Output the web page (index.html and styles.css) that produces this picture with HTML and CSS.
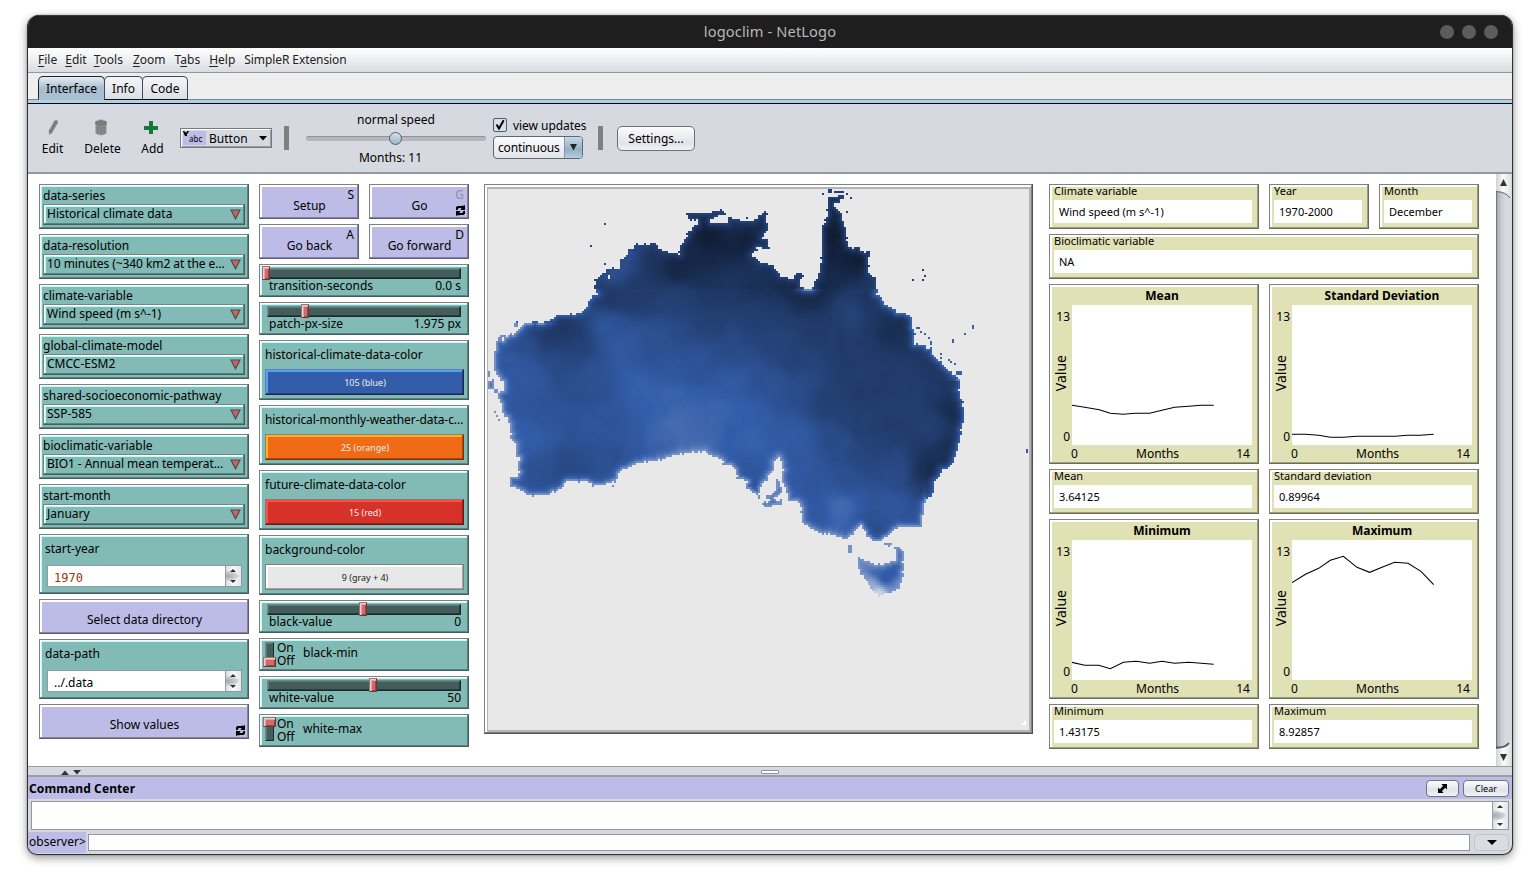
FILE: index.html
```html
<!DOCTYPE html>
<html lang="en">
<head>
<meta charset="utf-8">
<title>logoclim - NetLogo</title>
<link rel="stylesheet" href="styles.css">
</head>
<body>
<svg class="defs" width="0" height="0">
  <symbol id="cycle" viewBox="0 0 11 11">
    <path d="M1 5V2.2L2.4 1H6.8V0L8 1.2L9 .2H10V5H5.8V4L6.8 3H3.6L2.6 5Z"/>
    <path d="M10 6V8.8L8.6 10H4.2V11L3 9.8L2 10.8H1V6H5.2V7L4.2 8H7.4L8.4 6Z"/>
  </symbol>
  <symbol id="tri" viewBox="0 0 11 11"><path d="M1 1H10L5.5 9.8Z" fill="#c86464" stroke="#484848" stroke-width="1.1"/></symbol>
</svg>
<div class="window">
  <div class="titlebar"><span class="title">logoclim - NetLogo</span><span class="dots"><i></i><i></i><i></i></span></div>
  <nav class="menubar"><span><u>F</u>ile</span><span><u>E</u>dit</span><span class="m-tools"><u>T</u>ools</span><span class="m-zoom"><u>Z</u>oom</span><span class="m-gap">T<u>a</u>bs</span><span class="m-gap"><u>H</u>elp</span><span class="m-gap m-tight">SimpleR Extension</span></nav>
  <div class="tabs"><span class="tab on">Interface</span><span class="tab info">Info</span><span class="tab code">Code</span></div>
  <div class="tabline"></div>
  <div class="toolbar">
    <div class="tool t-edit"><svg width="12" height="17" viewBox="0 0 12 17"><path d="M7.5 1.5L10.5 1L10.8 4L5.5 13.5L2 16L1.8 11.5Z" fill="#8b8b8b"/><path d="M7 2.5L10.3 4.3M2 12L5 13.5M8 4L4 12" stroke="#636363" stroke-width=".8"/></svg>Edit</div>
    <div class="tool t-del"><svg width="14" height="17" viewBox="0 0 14 17"><path d="M1.5 4H12.5V14.5Q7 18 1.5 14.5Z" fill="#8e8e8e"/><ellipse cx="7" cy="3.5" rx="6" ry="2.3" fill="#7b7b7b"/><path d="M5 1.2H9M4 7V14.5M7 7.5V15M10 7V14.5M1.5 5Q7 7.5 12.5 5" fill="none" stroke="#747474"/></svg>Delete</div>
    <div class="tool t-add"><svg width="14" height="17" viewBox="0 0 14 17"><path d="M5 2H9V7H14V11H9V15H5V11H0V7H5Z" fill="#16793a"/></svg>Add</div>
    <div class="widgetpick"><span class="pickicon"><svg width="6" height="5" viewBox="0 0 6 5"><path d="M0 0H1L2 1H3V2L4 1V0H6L5 2L4 3V5H2L1 3Z"/></svg>abc</span><span class="picktext">Button</span><svg width="8" height="5" viewBox="0 0 8 5"><path d="M0 0H8L4 4.6Z"/></svg></div>
    <div class="sep s1"></div>
    <div class="speed"><span>normal speed</span><div class="track"><i></i></div><span class="ticks">Months: 11</span></div>
    <div class="updates"><div class="check"><svg width="14" height="14" viewBox="0 0 14 14"><rect x=".5" y=".5" width="13" height="13" rx="1.5" fill="#d4e0ea" stroke="#49606f"/><path d="M3.5 6.5L6 10.5L10.7 2.3" fill="none" stroke="#000" stroke-width="2"/></svg><span>view updates</span></div>
      <div class="combo"><span>continuous</span><b><svg width="7" height="7" viewBox="0 0 7 7"><path d="M0 0H7L3.5 6.5Z" fill="#222"/></svg></b></div></div>
    <div class="sep s2"></div>
    <div class="settings">Settings...</div>
  </div>
  <div class="workspace">
    <div class="stage">
      <section class="col1">
        <div class="w teal chooser"><label>data-series</label><div class="box"><span>Historical climate data</span><svg width="11" height="11"><use href="#tri"/></svg></div></div>
        <div class="w teal chooser"><label>data-resolution</label><div class="box"><span class="squeeze">10 minutes (~340 km2 at the e...</span><svg width="11" height="11"><use href="#tri"/></svg></div></div>
        <div class="w teal chooser"><label>climate-variable</label><div class="box"><span>Wind speed (m s^-1)</span><svg width="11" height="11"><use href="#tri"/></svg></div></div>
        <div class="w teal chooser"><label>global-climate-model</label><div class="box"><span>CMCC-ESM2</span><svg width="11" height="11"><use href="#tri"/></svg></div></div>
        <div class="w teal chooser"><label>shared-socioeconomic-pathway</label><div class="box"><span>SSP-585</span><svg width="11" height="11"><use href="#tri"/></svg></div></div>
        <div class="w teal chooser"><label>bioclimatic-variable</label><div class="box"><span class="squeeze">BIO1 - Annual mean temperat...</span><svg width="11" height="11"><use href="#tri"/></svg></div></div>
        <div class="w teal chooser"><label>start-month</label><div class="box"><span>January</span><svg width="11" height="11"><use href="#tri"/></svg></div></div>
        <div class="w teal input"><label>start-year</label><div class="field"><span class="num">1970</span><div class="mini"></div></div></div>
        <div class="w purple button"><span>Select data directory</span></div>
        <div class="w teal input"><label>data-path</label><div class="field"><span>../.data</span><div class="mini"></div></div></div>
        <div class="w purple button"><span>Show values</span><svg class="loop" width="11" height="11"><use href="#cycle"/></svg></div>
      </section>
      <section class="col2">
        <div class="pair"><div class="w purple button"><span>Setup</span><em>S</em></div><div class="w purple button"><span>Go</span><em class="dim">G</em><svg class="loop" width="11" height="11"><use href="#cycle"/></svg></div></div>
        <div class="pair"><div class="w purple button"><span>Go back</span><em>A</em></div><div class="w purple button"><span>Go forward</span><em>D</em></div></div>
        <div class="w teal slider"><div class="groove"><i style="left:-6px"></i></div><div class="cap"><span>transition-seconds</span><span>0.0 s</span></div></div>
        <div class="w teal slider"><div class="groove"><i style="left:33px"></i></div><div class="cap"><span>patch-px-size</span><span>1.975 px</span></div></div>
        <div class="w teal color"><label>historical-climate-data-color</label><div class="swatch blue">105 (blue)</div></div>
        <div class="w teal color"><label class="squeeze">historical-monthly-weather-data-c...</label><div class="swatch orange">25 (orange)</div></div>
        <div class="w teal color"><label>future-climate-data-color</label><div class="swatch red">15 (red)</div></div>
        <div class="w teal color"><label>background-color</label><div class="swatch gray">9 (gray + 4)</div></div>
        <div class="w teal slider"><div class="groove"><i style="left:91px"></i></div><div class="cap"><span>black-value</span><span>0</span></div></div>
        <div class="w teal switch"><div class="slot"><i class="off"></i></div><div class="states"><span>On</span><span>Off</span></div><label>black-min</label></div>
        <div class="w teal slider"><div class="groove"><i style="left:101px"></i></div><div class="cap"><span>white-value</span><span>50</span></div></div>
        <div class="w teal switch"><div class="slot"><i></i></div><div class="states"><span>On</span><span>Off</span></div><label>white-max</label></div>
      </section>
      <div class="view"><div class="world"><canvas id="world" width="271" height="272"></canvas></div></div>
      <section class="col3">
        <div class="w olive monitor wide2"><label>Climate variable</label><div>Wind speed (m s^-1)</div></div>
        <div class="w olive monitor"><label>Year</label><div>1970-2000</div></div>
        <div class="w olive monitor"><label>Month</label><div>December</div></div>
        <div class="w olive monitor wide4"><label>Bioclimatic variable</label><div>NA</div></div>
        <div class="w olive plot wide2"><h3>Mean</h3><div class="yaxis"><span>13</span><b>Value</b><span>0</span></div><svg class="area" viewBox="0 0 540 420"><polyline points="0,301 38,307 82,314 115,325 154,328 190,325 233,325 270,316 308,307 350,304 387,301 425,301"/></svg><div class="xaxis"><span>0</span><span class="mid">Months</span><span>14</span></div></div>
        <div class="w olive plot wide2"><h3>Standard Deviation</h3><div class="yaxis"><span>13</span><b>Value</b><span>0</span></div><svg class="area" viewBox="0 0 540 420"><polyline points="0,388 40,388 80,391 115,397 154,397 195,394 310,394 345,391 385,391 425,388"/></svg><div class="xaxis"><span>0</span><span class="mid">Months</span><span>14</span></div></div>
        <div class="w olive monitor wide2"><label>Mean</label><div>3.64125</div></div>
        <div class="w olive monitor wide2"><label>Standard deviation</label><div>0.89964</div></div>
        <div class="w olive plot wide2"><h3>Minimum</h3><div class="yaxis"><span>13</span><b>Value</b><span>0</span></div><svg class="area" viewBox="0 0 540 420"><polyline points="0,367 38,376 80,376 115,386 154,367 193,364 233,370 270,364 308,370 350,367 425,373"/></svg><div class="xaxis"><span>0</span><span class="mid">Months</span><span>14</span></div></div>
        <div class="w olive plot wide2"><h3>Maximum</h3><div class="yaxis"><span>13</span><b>Value</b><span>0</span></div><svg class="area" viewBox="0 0 540 420"><polyline points="0,128 42,102 80,85 115,61 154,49 195,82 233,97 270,82 308,67 348,70 387,94 425,134"/></svg><div class="xaxis"><span>0</span><span class="mid">Months</span><span>14</span></div></div>
        <div class="w olive monitor wide2"><label>Minimum</label><div>1.43175</div></div>
        <div class="w olive monitor wide2"><label>Maximum</label><div>8.92857</div></div>
      </section>
    </div>
    <div class="scroll">
      <svg width="16" height="592" viewBox="0 0 16 592">
        <defs><linearGradient id="sb"><stop offset="0" stop-color="#9b9da3"/><stop offset=".3" stop-color="#c6c9d1"/><stop offset=".6" stop-color="#d6d9e0"/></linearGradient><linearGradient id="bt"><stop offset="0" stop-color="#d2d3d6"/><stop offset=".5" stop-color="#fafafa"/><stop offset="1" stop-color="#dfe1e5"/></linearGradient></defs>
        <rect width="16" height="592" fill="url(#sb)"/><rect width="1" height="592" fill="#777"/>
        <path d="M0 0H15V25Q11 17 0 17Z" fill="url(#bt)"/><path d="M0 17.5Q10 18 14 24" fill="none" stroke="#666"/>
        <path d="M0 592H15V567Q11 575 0 575Z" fill="url(#bt)"/><path d="M0 573.5Q9 574 13 569" fill="none" stroke="#555" stroke-width="2"/>
        <path d="M7.5 5L11 12H4Z" fill="#333"/><path d="M7.5 587L11 580H4Z" fill="#333"/>
      </svg>
    </div>
  </div>
  <div class="divider"><svg width="20" height="5" viewBox="0 0 20 5"><path d="M0 5L4 .5L8 5ZM12 0H20L16 4.5Z" fill="#333"/></svg><i></i></div>
  <div class="cchead"><b>Command Center</b><span class="btn expand"><svg width="11" height="11" viewBox="0 0 11 11"><path d="M4.5 1H10V6.5L8.2 4.8L5 8L6.5 10H1V4.5L2.8 6.2L6 3Z"/></svg></span><span class="btn clear">Clear</span></div>
  <div class="ccbody">
    <div class="output"><div class="mini"></div></div>
    <div class="line"><span>observer&gt;</span><div class="cmd"></div><div class="hist"><svg width="10" height="5" viewBox="0 0 10 5"><path d="M0 0H10L5 5Z"/></svg></div></div>
  </div>
</div>
<script src="world.js"></script>
</body>
</html>
```
FILE: styles.css
```css
* { box-sizing: border-box; }
body { margin: 0; padding: 15px 27px; background: #fff; font: 12px/16px "Noto Sans", "Open Sans", sans-serif; color: #000; white-space: nowrap; height: 894px; overflow: hidden; }
.defs { position: absolute; }
.window { width: 1486px; height: 840px; border: 1px solid #303134; border-top: 0; border-radius: 12px 12px 10px 10px; background: #d6d9e0; overflow: hidden; box-shadow: 0 3px 10px rgba(0,0,0,.4), 0 0 2px rgba(0,0,0,.35); }
i { font-style: normal; display: block; }
svg { flex: none; display: block; }
.squeeze { letter-spacing: -.07px; }

.titlebar { height: 33px; background: #1e1e1e; border-top: 1px solid #3a3a3a; display: flex; align-items: center; justify-content: center; position: relative; color: #b8b8b8; font-size: 14.6px; letter-spacing: .15px; padding-bottom: 2px; }
.dots { position: absolute; right: 14px; top: 9px; display: flex; gap: 8px; }
.dots i { width: 14px; height: 14px; border-radius: 50%; background: #5c5c5c; }
.menubar { height: 25px; background: linear-gradient(#fff, #f1f2f4 40%, #d8dbe1); border-bottom: 1px solid #9297a3; display: flex; gap: 8px; padding: 4px 10px; color: #222; }
.menubar u { text-underline-offset: 2px; }
.m-tools { margin-left: -1px; }
.m-zoom { margin-left: 2px; }
.m-gap { margin-left: 1px; }
.m-tight { letter-spacing: -.09px; }
.tabs { height: 27px; background: #eee; border-bottom: 1px solid #7b8594; display: flex; padding: 3px 10px 0; }
.tab { height: 24px; border: 1px solid #45475a; border-bottom-color: #111; border-radius: 5px 5px 0 0; margin-right: -1px; text-align: center; line-height: 24px; background: linear-gradient(#f4f5f7, #dcdfe5); }
.tab.on { width: 67px; background: linear-gradient(#e6edf2, #a9bed0 50%, #a9c0d3); border-color: #17253c; border-bottom-color: #a9c0d3; }
.tab.info { width: 39px; }
.tab.code { width: 46px; }
.tabline { height: 4px; background: #b4cde0; border-bottom: 1px solid #000814; }

.toolbar { height: 70px; border-bottom: 2px solid #9297a5; display: flex; align-items: flex-start; padding-left: 10px; }
.tool { display: flex; flex-direction: column; align-items: center; padding-top: 15px; gap: 5px; }
.t-edit { width: 29px; }
.t-del { width: 71px; }
.t-add { width: 29px; }
.t-del svg, .t-add svg { margin-right: 3px; }
.widgetpick { margin: 24px 0 0 13px; width: 92px; height: 20px; border: 1px solid #7a7a7a; box-shadow: inset 1px 1px #fff, inset -1px -1px #9a9ca2; background: #d6d9e0; display: flex; align-items: center; padding: 0 4px 0 2px; }
.pickicon { width: 23px; height: 14px; background: #bcbce6; font-size: 8px; line-height: 15px; display: flex; }
.picktext { width: 38px; margin: 2px 12px 0 3px; }
.sep { width: 5px; height: 24px; margin-top: 22px; background: #808080; }
.s1 { margin-left: 12px; }
.s2 { margin-left: 15px; }
.speed { width: 180px; margin-left: 17px; padding-top: 8px; display: flex; flex-direction: column; align-items: center; }
.track { width: 180px; height: 5px; margin: 8px 0 9px; border-radius: 3px; background: #b4b7be; border-top: 1px solid #8f929b; }
.track i { width: 13px; height: 13px; margin: -5px 0 0 83px; border-radius: 50%; border: 1px solid #4d6274; background: linear-gradient(#d5e1eb, #9db5c8); }
.ticks { margin-right: 11px; }
.updates { width: 90px; margin-left: 7px; padding-top: 14px; }
.check { display: flex; gap: 6px; height: 18px; }
.check span { letter-spacing: -.05px; }
.combo { width: 90px; height: 23px; border: 1px solid #5b6876; border-radius: 4px; background: linear-gradient(#fbfbfc, #e3e5ea); display: flex; line-height: 22px; overflow: hidden; }
.combo span { width: 72px; padding-left: 4px; letter-spacing: -.15px; }
.combo b { width: 18px; background: linear-gradient(#c9d8e3, #93b0c5 60%, #b9cedd); border-left: 1px solid #7e97ab; display: flex; align-items: center; justify-content: center; }
.settings { margin: 22px 0 0 14px; width: 78px; height: 25px; border: 1px solid #6a7077; border-radius: 5px; background: linear-gradient(#fcfcfd, #e2e4ea 70%, #f0f2f5); text-align: center; line-height: 24px; }

.workspace { height: 592px; display: flex; background: #fff; }
.stage { width: 1468px; padding: 10px 0 0 11px; display: flex; align-items: flex-start; }
.col1, .col2 { width: 210px; display: flex; flex-direction: column; gap: 5px; }
.col2 { margin-left: 10px; }
.pair { display: grid; grid-template-columns: 100px 100px; gap: 10px; }
.w { border: 1px solid #808080; position: relative; }
.teal { background: #82bab5; border-right-color: #465f5d; border-bottom-color: #465f5d; box-shadow: inset -1px -1px #5b827f, inset 1px 1px #fff, inset 2px 2px #b6ffff; }
.purple { background: #bcbce6; border-right-color: #5c5c78; border-bottom-color: #5c5c78; box-shadow: inset -1px -1px #8484a1, inset 2px 2px #fff; }
.olive { background: #e0e1b5; border-right-color: #6c6d58; border-bottom-color: #6c6d58; box-shadow: inset -1px -1px #9c9d7e, inset 2px 2px #fff; }
.w label { display: block; }
.chooser { height: 45px; padding: 3px; }
.chooser label { height: 16px; }
.box { height: 21px; border: 1px solid #808080; border-right-color: #465f5d; border-bottom-color: #465f5d; box-shadow: inset -1px -1px #5b827f, inset 1px 1px #fff, inset 2px 2px #b6ffff; display: flex; justify-content: space-between; padding: 4px 3px 0; }
.box span { line-height: 16px; margin-top: -3px; }
.input { height: 60px; padding: 6px 6px 0 5px; }
.input .field { margin: 8px 0 0 2px; height: 22px; background: #fff; border: 1px solid #9297a3; display: flex; justify-content: space-between; width: 195px; }
.field span { padding-left: 6px; line-height: 24px; }
.field .num { font: 12px/24px "DejaVu Sans Mono", monospace; color: #963700; }
.mini { width: 16px; height: 100%; border-left: 1px solid #9b9da3; position: relative; background: radial-gradient(ellipse 13px 5px at 0 50%, #a4a6ab, #d0d2d8 90%, transparent 100%), linear-gradient(90deg, #dcdee2, #fafafa 50%, #e3e5e9); }
.mini::before { content: ""; position: absolute; left: 4px; top: 3px; border: 3px solid transparent; border-top: 0; border-bottom: 3px solid #333; }
.mini::after { content: ""; position: absolute; left: 4px; bottom: 3px; border: 3px solid transparent; border-bottom: 0; border-top: 3px solid #333; }
.button { height: 35px; text-align: center; padding: 12px 0 0 1px; line-height: 17px; }
.col1 .button { line-height: 16px; }
.button span { display: block; }
.button em { position: absolute; right: 4px; top: 2px; font-style: normal; line-height: 16px; }
.button .dim { color: #8f8fa5; }
.loop { position: absolute; right: 2px; bottom: 2px; }
.slider { height: 33px; padding: 3px 7px 0; }
.groove { height: 11px; background: #425d5a; border: 1px solid #808080; border-right-color: #1d2928; border-bottom-color: #1d2928; box-shadow: inset -1px -1px #2c3e3c, inset 1px 1px #587c79; position: relative; }
.groove i, .slot i { position: absolute; background: #cf6b6b; border: 1px solid #808080; border-right-color: #6c3838; border-bottom-color: #6c3838; box-shadow: inset 1px 1px #ffc4c4, inset 2px 2px #f69a9a, inset -1px -1px #8e4949; }
.groove i { width: 8px; height: 14px; top: -3px; }
.cap { display: flex; justify-content: space-between; padding-left: 2px; margin-top: -1px; }
.color { height: 60px; padding: 6px 4px 0 5px; }
.swatch { height: 26px; margin-top: 6px; width: 199px; border: 1px solid #808080; font-size: 9px; line-height: 25px; text-align: center; color: #eee; padding-left: 1px; }
.blue { background: #345da9; border-color: #6c7f9f #15284d #15284d #6c7f9f; box-shadow: inset -1px -1px #24417a, inset 2px 2px #51a1ff; }
.orange { background: #f16a15; border-color: #8b8176 #7b3408 #7b3408 #8b8176; box-shadow: inset -1px -1px #a94a0d, inset 2px 2px #ffb21f; }
.red { background: #d73229; border-color: #8b7673 #6e1712 #6e1712 #8b7673; box-shadow: inset -1px -1px #96231d, inset 2px 2px #ff4f41; }
.gray { background: #e8e8e8; border-color: #808080; box-shadow: inset -1px -1px #a2a2a2, inset 2px 2px #fff; color: #222; }
.switch { height: 33px; display: flex; padding: 3px 5px; }
.slot { width: 9px; height: 23px; background: #425d5a; border: 1px solid #808080; border-right-color: #1d2928; border-bottom-color: #1d2928; box-shadow: inset 1px 1px #587c79; position: relative; }
.slot i { width: 13px; height: 10px; left: -3px; top: -2px; }
.slot i.off { top: 14px; }
.states { margin: -1px 0 0 3px; width: 26px; display: flex; flex-direction: column; line-height: 13px; }
.states span { height: 13px; }
.switch label { padding-top: 3px; }

.view { margin-left: 15px; width: 549px; height: 550px; border: 1px solid #808080; border-right-color: #505050; border-bottom-color: #505050; box-shadow: inset -1px -1px #808080, inset 2px 2px #fff; padding: 2px 1px 1px 2px; }
.world { border: 2px solid #b4b4b4; border-left-width: 1px; width: 544px; height: 545px; overflow: hidden; background: #e8e8e8; }
.world canvas { width: 542px; height: 544px; display: block; image-rendering: pixelated; }

.col3 { margin-left: 16px; display: grid; grid-template-columns: 100px 100px 100px 100px; column-gap: 10px; row-gap: 5px; }
.wide2 { grid-column: span 2; }
.wide4 { grid-column: span 4; }
.monitor { height: 45px; font-size: 11px; padding: 0 6px 0 4px; }
.monitor label { height: 15px; line-height: 11px; }
.monitor div { height: 23px; background: #fff; padding-left: 5px; line-height: 24px; }
.plot { height: 180px; display: grid; grid-template: 20px 140px 18px / 22px 180px; }
.plot h3 { grid-column: 2; margin: 0; font-size: 12px; line-height: 16px; padding: 3px 0 0; text-align: center; }
.yaxis { display: flex; flex-direction: column; justify-content: space-between; align-items: flex-end; padding: 4px 2px 0 0; }
.yaxis b { writing-mode: vertical-rl; transform: rotate(180deg); font: 14px/16px "Noto Sans", sans-serif; margin: 2px 1px 10px 0; }
.area { width: 180px; height: 140px; background: #fff; }
.area polyline { fill: none; stroke: #000; stroke-width: 3.2; }
.xaxis { grid-column: 2; display: flex; justify-content: space-between; padding: 1px 2px 0 0; margin-left: -1px; }
.mid { padding-left: 1px; }
.scroll { width: 16px; }

.divider { height: 11px; border-top: 1px solid #9a9ca2; border-bottom: 2px solid #9a9ca8; padding: 3px 33px; position: relative; }
.divider i { position: absolute; left: 733px; top: 3px; width: 18px; height: 4px; border: 1px solid #8e929c; border-radius: 1px; background: #fff; }
.cchead { height: 22px; background: #bcbce6; display: flex; align-items: center; padding: 0 3px 0 1px; gap: 4px; }
.cchead b { flex: 1; padding-top: 2px; letter-spacing: .1px; }
.btn { height: 17px; border: 1px solid #6f757d; border-radius: 4px; background: linear-gradient(#fcfcfd, #e0e3e9 60%, #f3f4f6); display: flex; align-items: center; justify-content: center; }
.expand { width: 33px; }
.clear { width: 46px; font-size: 9px; padding-top: 1px; }
.ccbody { display: flex; flex-direction: column; }
.output { margin: 2px 3px 3px; height: 29px; border: 1px solid #9297a3; background: #fff; display: flex; justify-content: flex-end; }
.line { display: flex; align-items: flex-start; margin-top: -1px; }
.line span { width: 58px; height: 21px; background: #bcbce6; padding: 2px 0 0 1px; }
.cmd { width: 1382px; height: 17px; margin: 2px 0 0 2px; border: 1px solid #9297a3; background: #fff; }
.hist { margin: 2px 0 0 4px; width: 35px; height: 17px; border: 1px solid #c0c3ca; border-radius: 4px; background: #d9dce2; display: flex; align-items: center; justify-content: center; }
```
FILE: world.js
```js
// Patch world: 271 x 272 patches; coordinates below are in sixths of a patch.
const U = 6, OX = 24, OY = 27;
const canvas = document.getElementById('world');
const W = canvas.width, H = canvas.height, ctx = canvas.getContext('2d');

const mainland = [48,490,55,468,75,468,100,462,122,440,140,428,165,424,185,430,210,420,232,405,270,405,300,398,316,388,330,360,332,348,352,345,345,325,345,300,358,290,378,275,390,264,405,264,420,270,420,238,440,230,440,210,460,206,465,192,505,192,510,186,526,188,530,200,545,210,560,218,585,220,597,225,600,200,610,195,612,178,622,172,622,155,635,150,638,138,655,130,650,120,628,118,622,100,640,97,645,103,672,97,685,98,700,93,730,90,735,105,760,115,775,122,800,127,820,118,832,110,850,102,858,90,862,95,857,125,866,135,862,155,848,175,866,180,866,208,845,205,830,208,815,222,830,240,845,248,870,250,885,265,905,290,940,297,945,280,965,282,971,292,960,298,955,315,975,327,990,327,1003,318,1003,300,1015,290,1022,250,1026,210,1026,150,1035,120,1042,105,1045,55,1050,40,1058,60,1060,75,1078,95,1088,110,1094,140,1100,160,1105,200,1118,208,1130,200,1150,215,1166,213,1166,270,1170,290,1188,295,1192,345,1208,355,1210,375,1240,385,1250,402,1272,400,1295,410,1297,435,1305,465,1300,490,1330,495,1340,505,1355,500,1358,525,1382,545,1398,565,1420,585,1438,590,1440,650,1450,660,1453,715,1445,745,1436,800,1422,840,1410,860,1390,868,1365,905,1355,945,1335,965,1330,1000,1325,1038,1250,1042,1220,1070,1195,1086,1160,1070,1155,1055,1143,1035,1120,1060,1095,1080,1065,1065,1020,1060,990,1046,965,1025,965,980,950,960,926,964,914,925,906,905,908,880,906,850,895,833,884,850,880,875,868,884,864,902,848,908,842,928,832,945,820,940,810,930,800,925,800,905,775,893,768,870,745,850,735,853,720,835,690,828,680,815,620,818,580,828,545,840,500,845,470,850,440,865,415,875,408,905,370,915,335,913,320,903,260,905,245,925,215,940,205,946,145,946,125,930,90,918,90,895,115,885,118,830,105,825,110,800,95,780,88,740,82,715,68,700,65,670,50,650,55,640,72,625,70,610,55,590,42,570,42,540];
const yorke = [888,896,900,904,904,928,896,950,878,958,860,954,858,946,878,944,886,925];
const kangaroo = [848,966,880,960,905,962,910,972,885,975,870,982,850,978];
const tasmania = [1133,1130,1150,1140,1190,1152,1220,1150,1250,1138,1243,1102,1256,1100,1271,1112,1271,1190,1257,1230,1230,1235,1215,1243,1195,1246,1172,1225,1155,1198,1134,1165];
const land = [mainland, yorke, kangaroo, tasmania];
// Rectangles punched out of, and added to, the coast: x, y, w, h
const lakes = [[712,108,34,20],[704,114,12,14],[692,118,14,12],[384,284,8,14],[1140,1044,6,8],[826,204,20,6],[66,470,6,12],[60,612,6,18],[882,872,12,10],[1300,445,8,12],[1318,478,6,10]];
const islets = [[375,131,6,6],[330,198,6,6],[375,249,6,6],[1026,40,6,6],[1046,27,10,10],[1062,34,30,8],[1072,46,22,12],[1050,54,30,14],[1046,66,16,40],[1100,40,6,6],[1113,51,6,6],[1100,96,6,6],[1326,267,6,6],[1335,285,6,6],[1326,297,6,6],[1296,297,6,6],[1476,438,6,12],[1455,462,6,3],[1419,477,6,12],[1641,807,6,12],[1383,519,6,6],[1383,530,6,6],[1402,537,6,6],[1408,543,6,6],[1420,549,6,6],[1430,573,18,10],[1440,582,6,6],[110,421,6,10],[100,430,12,12],[24,573,6,20],[24,603,18,26],[36,598,8,12],[42,627,12,12],[42,696,6,6],[48,705,6,6],[54,716,6,6],[770,894,18,6],[728,850,24,6],[336,915,6,6],[348,910,8,6],[394,916,6,6],[1104,1098,14,20],[1102,1102,6,6],[1210,1090,24,6],[1224,1098,8,6],[1320,455,6,6],[1332,460,6,6],[1310,440,8,8],[1345,470,6,6],[1350,486,8,8],[834,948,4,12],[775,118,6,6],[798,114,6,6],[640,98,70,14]];
// Wind field samples: x, y, shade (0 black, .5 blue, 1 white)
const field = [700,170,.15, 690,240,.2, 800,190,.16, 600,265,.18, 700,290,.26, 800,270,.25, 520,240,.27, 440,230,.42, 400,340,.28, 390,290,.44, 470,340,.31, 600,350,.33, 720,340,.29, 850,320,.25, 740,110,.25, 850,150,.22, 900,400,.3, 250,440,.27, 200,460,.3, 130,480,.4, 100,560,.46, 150,600,.46, 250,540,.37, 290,480,.31, 380,430,.45, 440,500,.46, 540,520,.41, 370,340,.3, 320,600,.42, 300,650,.4, 200,700,.43, 150,770,.49, 170,870,.43, 270,870,.38, 350,720,.45, 400,830,.41, 450,780,.47, 480,620,.51, 560,560,.46, 600,720,.545, 540,770,.52, 560,660,.515, 660,740,.53, 700,680,.51, 750,620,.47, 800,700,.49, 820,780,.5, 640,560,.44, 750,500,.39, 600,470,.38, 700,420,.33, 830,400,.32, 850,860,.48, 950,850,.47, 930,780,.48, 950,620,.4, 950,540,.34, 870,600,.42, 800,920,.4, 900,480,.35, 990,355,.18, 930,330,.2, 1060,160,.14, 1050,90,.17, 1130,240,.15, 1060,280,.21, 1040,230,.16, 1110,390,.35, 1000,430,.3, 1150,340,.28, 1200,400,.28, 1240,430,.22, 1280,470,.25, 1100,500,.31, 1200,550,.31, 1150,650,.3, 1050,650,.33, 1250,700,.31, 1300,600,.31, 1380,600,.28, 1420,700,.23, 1400,810,.24, 1370,740,.33, 1345,880,.21, 1340,930,.32, 1240,880,.38, 1150,820,.35, 1150,740,.32, 1080,800,.39, 1100,900,.41, 1000,900,.45, 1080,980,.54, 1010,1000,.47, 1200,1020,.46, 1260,980,.47, 1190,1055,.34, 1300,1000,.42, 1240,1170,.46, 1195,1240,.9, 1172,1212,.76, 1150,1160,.6, 1260,1220,.6, 1215,1195,.44, 1190,1175,.5, 1260,1110,.5];

function inside(poly, x, y) {
  let hit = false;
  for (let i = 0, j = poly.length - 2; i < poly.length; j = i, i += 2) {
    const yi = poly[i + 1], yj = poly[j + 1];
    if ((yi > y) !== (yj > y) && x < (poly[j] - poly[i]) * (y - yi) / (yj - yi) + poly[i]) hit = !hit;
  }
  return hit;
}
function hash(x, y) {
  const s = Math.sin(x * 127.1 + y * 311.7) * 43758.5453;
  return s - Math.floor(s);
}
function smoothNoise(x, y) {
  const a = Math.floor(x), b = Math.floor(y);
  let u = x - a, v = y - b;
  u = u * u * (3 - 2 * u); v = v * v * (3 - 2 * v);
  const top = hash(a, b) * (1 - u) + hash(a + 1, b) * u;
  const low = hash(a, b + 1) * (1 - u) + hash(a + 1, b + 1) * u;
  return top * (1 - v) + low * v - .5;
}
function inRects(list, x, y) {
  return list.some(r => x >= r[0] && x < r[0] + r[2] && y >= r[1] && y < r[1] + r[3]);
}

const mask = new Uint8Array(W * H);
for (let j = 0; j < H; j++) for (let i = 0; i < W; i++) {
  const x = OX + i * U + 3, y = OY + j * U + 3;
  const px = x + (hash(i, j) - .5) * 5, py = y + (hash(j, i + 9) - .5) * 5;
  let on = land.some(p => inside(p, px, py));
  if (inRects(lakes, x, y)) on = false;
  if (inRects(islets, x, y)) on = true;
  mask[j * W + i] = on ? 1 : 0;
}
function seaDistance(i, j) {
  let best = 6;
  for (let b = -5; b <= 5; b++) for (let a = -5; a <= 5; a++) {
    const q = i + a, r = j + b;
    if (q < 0 || r < 0 || q >= W || r >= H || !mask[r * W + q]) best = Math.min(best, Math.hypot(a, b));
  }
  return best;
}
function coastShade(x, y) {
  if (y < 330) return .36;
  if (x > 1340 && y > 600 && y < 1040) return .5;
  if (x > 1150 && y < 600) return .54;
  if (y < 430 && x < 400) return .5;
  return .68;
}
const img = ctx.createImageData(W, H);
for (let j = 0; j < H; j++) for (let i = 0; i < W; i++) {
  const k = (j * W + i) * 4;
  let rgb = [232, 232, 232];
  if (mask[j * W + i]) {
    const x = OX + i * U + 3, y = OY + j * U + 3;
    const soft = y > 1090 ? 400 : 2800;
    let sum = 0, wsum = 0;
    for (let f = 0; f < field.length; f += 3) {
      const d2 = (x - field[f]) ** 2 + (y - field[f + 1]) ** 2;
      const w = (d2 + soft) ** (y > 1090 ? -1.8 : -2.5);
      sum += w * field[f + 2]; wsum += w;
    }
    let v = sum / wsum + smoothNoise(i / 11, j / 11) * .025 + smoothNoise(i / 4, j / 4) * .016 + (hash(i, j) - .5) * .006;
    const e = Math.exp(-(seaDistance(i, j) - 1) / 1.6);
    const c = coastShade(x, y);
    if (c > v) v += (c - v) * e * .9;
    rgb = v < .5 ? [102 * v, 186 * v, 338 * v]
      : [51 + (v - .5) * 408, 93 + (v - .5) * 324, 169 + (v - .5) * 172];
  }
  img.data.set([rgb[0], rgb[1], rgb[2], 255], k);
}
ctx.putImageData(img, 0, 0);
ctx.fillStyle = '#fff';
ctx.fillRect(268, 266, 1, 2);
ctx.fillRect(267, 267, 2, 1);
```
